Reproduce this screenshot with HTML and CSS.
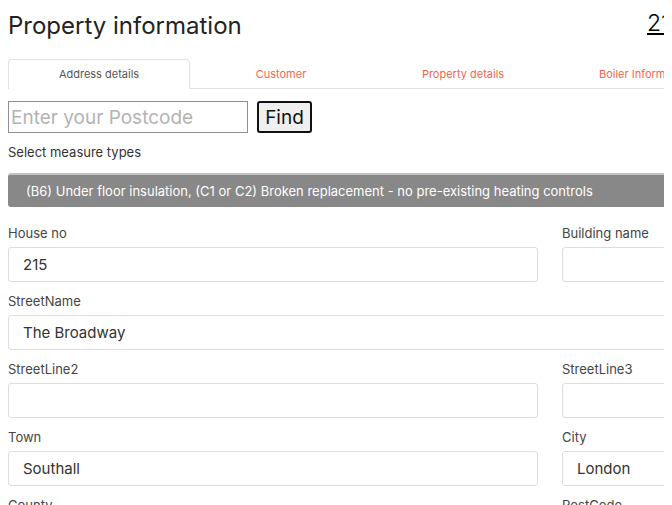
FILE: index.html
```html
<!DOCTYPE html>
<html lang="en">

<head>
    <meta charset="UTF-8">
    <meta name="viewport" content="width=device-width, initial-scale=1.0">
    <title>Property information</title>
    <link rel="stylesheet" href="styles.css">
</head>

<body>
    <div class="page">
        <div class="page-inner">
            <div class="page-head">
                <h1 class="page-title">Property information</h1>
                <a class="address-link" href="#">215 The Broadway, Southall, London</a>
            </div>

            <ul class="tabs">
                <li class="tab active">Address details</li>
                <li class="tab">Customer</li>
                <li class="tab">Property details</li>
                <li class="tab">Boiler Information</li>
            </ul>

            <div class="postcode-row">
                <input type="text" class="postcode" placeholder="Enter your Postcode">
                <button class="find-btn">Find</button>
            </div>

            <div class="measure-label">Select measure types</div>
            <div class="measure-bar">(B6) Under floor insulation, (C1 or C2) Broken replacement - no pre-existing heating controls</div>

            <div class="fields">
                <div class="field">
                    <label for="houseNo">House no</label>
                    <input type="text" id="houseNo" value="215">
                </div>
                <div class="field">
                    <label for="buildingName">Building name</label>
                    <input type="text" id="buildingName">
                </div>
                <div class="field wide">
                    <label for="streetName">StreetName</label>
                    <input type="text" id="streetName" value="The Broadway">
                </div>
                <div class="field">
                    <label for="streetLine2">StreetLine2</label>
                    <input type="text" id="streetLine2">
                </div>
                <div class="field">
                    <label for="streetLine3">StreetLine3</label>
                    <input type="text" id="streetLine3">
                </div>
                <div class="field">
                    <label for="town">Town</label>
                    <input type="text" id="town" value="Southall">
                </div>
                <div class="field">
                    <label for="city">City</label>
                    <input type="text" id="city" value="London">
                </div>
                <div class="field">
                    <label for="county">County</label>
                    <input type="text" id="county">
                </div>
                <div class="field">
                    <label for="postCode">PostCode</label>
                    <input type="text" id="postCode">
                </div>
            </div>
        </div>
    </div>
</body>

</html>
```

FILE: styles.css
```css
html {
    background-color: #fff;
    font-family: Inter, "Open Sans", sans-serif;
}

body {
    margin: 0;
}

.page {
    margin: 0 8px;
    height: 505px;
    overflow: hidden;
}

.page-inner {
    width: 1084px;
}

.page-head {
    display: flex;
    align-items: flex-start;
    padding-top: 10px;
}

.page-title {
    width: 639px;
    margin: 0;
    font-size: 24px;
    font-weight: 400;
    line-height: 32px;
    color: #222;
}

.address-link {
    font-size: 23px;
    font-weight: 300;
    line-height: 26px;
    color: #000;
    white-space: nowrap;
}

.tabs {
    display: flex;
    list-style: none;
    margin: 17px 0 0;
    padding: 0;
    border-bottom: 1px solid #dee2e6;
}

.tab {
    width: 180px;
    flex-shrink: 0;
    height: 28px;
    line-height: 28px;
    text-align: center;
    font-size: 11px;
    color: #f4664c;
    border: 1px solid transparent;
    border-bottom: 0;
    margin-bottom: -1px;
    white-space: nowrap;
}

.tab.active {
    color: #555;
    background: #fff;
    border-color: #dee2e6;
    border-radius: 4px 4px 0 0;
    height: 29px;
}

.postcode-row {
    display: flex;
    gap: 9px;
    margin-top: 12px;
}

.postcode {
    width: 240px;
    height: 32px;
    box-sizing: border-box;
    border: 1px solid #8f8f8f;
    padding: 0 2px;
    font-family: inherit;
    font-size: 19px;
    color: #333;
}

.postcode::placeholder {
    color: #b3b3b3;
}

.find-btn {
    height: 32px;
    width: 55px;
    box-sizing: border-box;
    border: 2px solid #111;
    border-radius: 3px;
    background: #efefef;
    font-family: inherit;
    font-size: 19px;
    color: #111;
    padding: 0;
}

.measure-label {
    margin-top: 10px;
    font-size: 13px;
    line-height: 18px;
    color: #333;
}

.measure-bar {
    margin-top: 12px;
    height: 34px;
    box-sizing: border-box;
    line-height: 32px;
    padding-left: 18px;
    background: #888;
    border-top: 2px solid #c4c4c4;
    border-radius: 3px 0 0 3px;
    color: #fff;
    font-size: 13px;
    white-space: nowrap;
}

.fields {
    display: grid;
    grid-template-columns: 530px 530px;
    column-gap: 24px;
    margin-top: 17px;
}

.field {
    margin-bottom: 10px;
}

.field.wide {
    grid-column: 1 / 3;
}

.field label {
    display: block;
    font-size: 13px;
    line-height: 18px;
    margin-bottom: 5px;
    color: #444;
}

.field input {
    display: block;
    width: 100%;
    height: 35px;
    box-sizing: border-box;
    border: 1px solid #ddd;
    border-radius: 3px;
    padding: 0 14px;
    font-family: inherit;
    font-size: 15px;
    color: #333;
}
```
